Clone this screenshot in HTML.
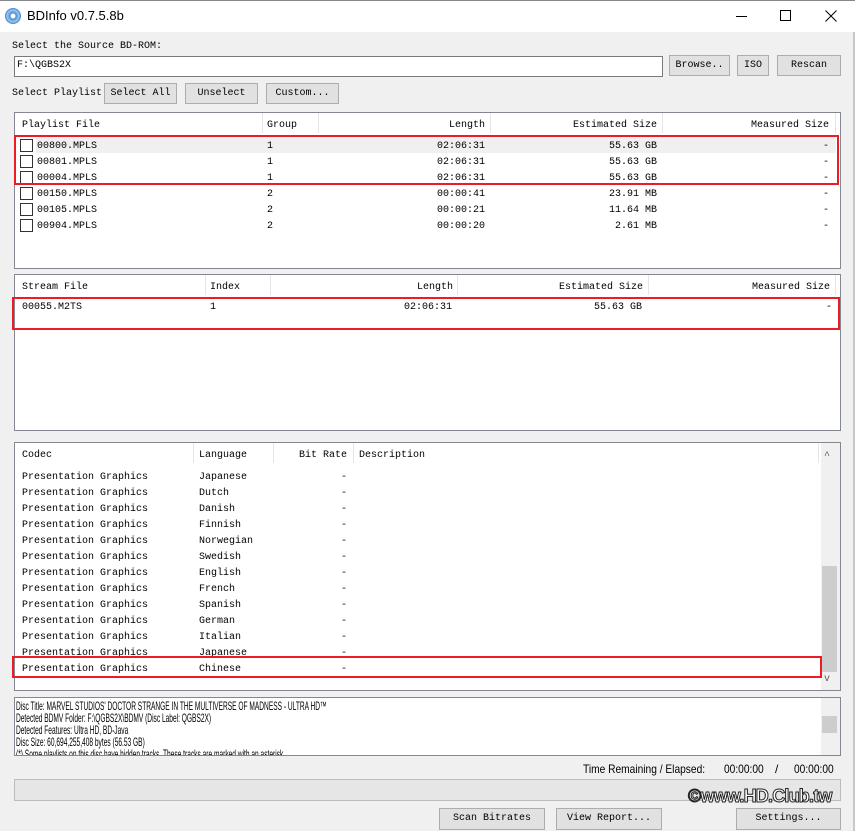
<!DOCTYPE html>
<html><head><meta charset="utf-8"><style>
*{margin:0;padding:0;box-sizing:border-box}
body{width:855px;height:831px;background:#f0f0f0;position:relative;overflow:hidden;font-family:"Liberation Mono","Noto Sans CJK SC",monospace;font-size:10px;color:#000}
div,span{position:absolute}
.t{white-space:pre;line-height:12px}
.btn{background:#e1e1e1;border:1px solid #adadad;text-align:center;line-height:20px;white-space:pre}
.box{background:#fff;border:1px solid #828790}
.sep{width:1px;background:#e5e5e5;top:1px;height:20px}
.red{border:2px solid #ed1c24}
.r{text-align:right}
.cb{width:13px;height:13px;border:1px solid #333;background:#fff}
</style></head><body>
<div style="left:0;top:0;width:855px;height:32px;background:#fff;border-top:1px solid #888"></div>
<div style="left:5px;top:8px;width:16px;height:16px;border-radius:50%;background:radial-gradient(circle,#fff 0 2px,#4a8fd6 3px,#9cc6ef 6px,#3b7cc4 8px)"></div>
<div style="left:27px;top:7px;font-family:'Liberation Sans',sans-serif;font-size:13px;line-height:18px;white-space:pre">BDInfo v0.7.5.8b</div>
<div style="left:736px;top:16px;width:11px;height:1px;background:#000"></div>
<div style="left:780px;top:10px;width:11px;height:11px;border:1px solid #000"></div>
<svg style="position:absolute;left:825px;top:10px" width="12" height="12"><path d="M0.5 0.5L11.5 11.5M11.5 0.5L0.5 11.5" stroke="#000" stroke-width="1"/></svg>
<div style="left:853px;top:32px;width:2px;height:799px;background:#c8c8c8"></div>

<div class="t" style="left:12px;top:41px">Select the Source BD-ROM:</div>
<div class="box" style="left:14px;top:56px;width:649px;height:21px;border-color:#7a7a7a"></div>
<div class="t" style="left:17px;top:60px">F:\QGBS2X</div>
<div class="btn" style="left:669px;top:55px;width:61px;height:21px">Browse..</div>
<div class="btn" style="left:737px;top:55px;width:32px;height:21px">ISO</div>
<div class="btn" style="left:777px;top:55px;width:64px;height:21px">Rescan</div>

<div class="t" style="left:12px;top:88px">Select Playlist</div>
<div class="btn" style="left:104px;top:83px;width:73px;height:21px">Select All</div>
<div class="btn" style="left:185px;top:83px;width:73px;height:21px">Unselect</div>
<div class="btn" style="left:266px;top:83px;width:73px;height:21px">Custom...</div>

<div class="box" style="left:14px;top:112px;width:827px;height:157px"></div>
<div class="sep" style="left:262px;top:113px"></div><div class="sep" style="left:318px;top:113px"></div><div class="sep" style="left:490px;top:113px"></div><div class="sep" style="left:662px;top:113px"></div><div class="sep" style="left:835px;top:113px"></div>
<div class="t" style="left:22px;top:120px">Playlist File</div>
<div class="t" style="left:267px;top:120px">Group</div>
<div class="t r" style="left:318px;top:120px;width:167px">Length</div>
<div class="t r" style="left:490px;top:120px;width:167px">Estimated Size</div>
<div class="t r" style="left:662px;top:120px;width:167px">Measured Size</div>
<div style="left:36px;top:137px;width:800px;height:16px;background:#f0f0f0"></div>
<div style="left:15px;top:137px;width:825px">
<div class="cb" style="left:5px;top:2px"></div><div class="cb" style="left:5px;top:18px"></div><div class="cb" style="left:5px;top:34px"></div><div class="cb" style="left:5px;top:50px"></div><div class="cb" style="left:5px;top:66px"></div><div class="cb" style="left:5px;top:82px"></div>
<div class="t" style="left:22px;top:2px;line-height:16px">00800.MPLS
00801.MPLS
00004.MPLS
00150.MPLS
00105.MPLS
00904.MPLS</div>
<div class="t" style="left:252px;top:2px;line-height:16px">1
1
1
2
2
2</div>
<div class="t r" style="left:303px;top:2px;width:167px;line-height:16px">02:06:31
02:06:31
02:06:31
00:00:41
00:00:21
00:00:20</div>
<div class="t r" style="left:475px;top:2px;width:167px;line-height:16px">55.63 GB
55.63 GB
55.63 GB
23.91 MB
11.64 MB
2.61 MB</div>
<div class="t r" style="left:647px;top:2px;width:167px;line-height:16px">-
-
-
-
-
-</div>
</div>
<div class="red" style="left:14px;top:135px;width:825px;height:50px"></div>

<div class="box" style="left:14px;top:274px;width:827px;height:157px"></div>
<div class="sep" style="left:205px;top:275px"></div><div class="sep" style="left:270px;top:275px"></div><div class="sep" style="left:457px;top:275px"></div><div class="sep" style="left:648px;top:275px"></div><div class="sep" style="left:835px;top:275px"></div>
<div class="t" style="left:22px;top:282px">Stream File</div>
<div class="t" style="left:210px;top:282px">Index</div>
<div class="t r" style="left:270px;top:282px;width:183px">Length</div>
<div class="t r" style="left:457px;top:282px;width:186px">Estimated Size</div>
<div class="t r" style="left:648px;top:282px;width:182px">Measured Size</div>
<div class="t" style="left:22px;top:302px">00055.M2TS</div>
<div class="t" style="left:210px;top:302px">1</div>
<div class="t r" style="left:270px;top:302px;width:182px">02:06:31</div>
<div class="t r" style="left:457px;top:302px;width:185px">55.63 GB</div>
<div class="t r" style="left:648px;top:302px;width:184px">-</div>
<div class="red" style="left:12px;top:297px;width:828px;height:33px"></div>

<div class="box" style="left:14px;top:442px;width:827px;height:249px"></div>
<div class="sep" style="left:193px;top:443px"></div><div class="sep" style="left:273px;top:443px"></div><div class="sep" style="left:353px;top:443px"></div><div class="sep" style="left:818px;top:443px"></div>
<div class="t" style="left:22px;top:450px">Codec</div>
<div class="t" style="left:199px;top:450px">Language</div>
<div class="t r" style="left:273px;top:450px;width:74px">Bit Rate</div>
<div class="t" style="left:359px;top:450px">Description</div>
<div class="t" style="left:22px;top:470px;line-height:16px">Presentation Graphics
Presentation Graphics
Presentation Graphics
Presentation Graphics
Presentation Graphics
Presentation Graphics
Presentation Graphics
Presentation Graphics
Presentation Graphics
Presentation Graphics
Presentation Graphics
Presentation Graphics
Presentation Graphics</div>
<div class="t" style="left:199px;top:470px;line-height:16px">Japanese
Dutch
Danish
Finnish
Norwegian
Swedish
English
French
Spanish
German
Italian
Japanese
Chinese</div>
<div class="t r" style="left:273px;top:470px;width:74px;line-height:16px">-
-
-
-
-
-
-
-
-
-
-
-
-</div>
<div style="left:821px;top:443px;width:19px;height:247px;background:#f0f0f0"></div>
<div style="left:822px;top:566px;width:15px;height:106px;background:#cdcdcd"></div>
<div class="t" style="left:824px;top:451px;color:#606060">^</div>
<div class="t" style="left:824px;top:674px;color:#606060">v</div>
<div class="red" style="left:12px;top:656px;width:810px;height:22px"></div>

<div class="box" style="left:14px;top:697px;width:827px;height:59px;overflow:hidden">
<div class="t" style="left:1px;top:2px;font-family:'Liberation Sans',sans-serif;font-size:12px;transform:scaleX(0.55);transform-origin:0 0">Disc Title: MARVEL STUDIOS' DOCTOR STRANGE IN THE MULTIVERSE OF MADNESS - ULTRA HD™
Detected BDMV Folder: F:\QGBS2X\BDMV (Disc Label: QGBS2X)
Detected Features: Ultra HD, BD-Java
Disc Size: 60,694,255,408 bytes (56.53 GB)
(*) Some playlists on this disc have hidden tracks. These tracks are marked with an asterisk.</div>
</div>
<div style="left:821px;top:698px;width:19px;height:57px;background:#f0f0f0"></div>
<div style="left:822px;top:716px;width:15px;height:17px;background:#cdcdcd"></div>

<div style="left:583px;top:762px;font-family:'Liberation Sans',sans-serif;font-size:12px;line-height:14px;white-space:pre;transform:scaleX(0.85);transform-origin:0 0">Time Remaining / Elapsed:</div>
<div style="left:724px;top:762px;font-family:'Liberation Sans',sans-serif;font-size:12px;line-height:14px;white-space:pre;transform:scaleX(0.85);transform-origin:0 0">00:00:00</div>
<div style="left:775px;top:762px;font-family:'Liberation Sans',sans-serif;font-size:12px;line-height:14px">/</div>
<div style="left:794px;top:762px;font-family:'Liberation Sans',sans-serif;font-size:12px;line-height:14px;white-space:pre;transform:scaleX(0.85);transform-origin:0 0">00:00:00</div>
<div style="left:14px;top:779px;width:827px;height:22px;background:#e6e6e6;border:1px solid #bcbcbc"></div>
<div style="left:688px;top:786px;font-family:'Liberation Sans',sans-serif;font-weight:bold;font-size:18px;line-height:20px;color:#fff;-webkit-text-stroke:1px #222;white-space:pre;letter-spacing:-0.8px">©www.HD.Club.tw</div>

<div class="btn" style="left:439px;top:808px;width:106px;height:22px">Scan Bitrates</div>
<div class="btn" style="left:556px;top:808px;width:106px;height:22px">View Report...</div>
<div class="btn" style="left:736px;top:808px;width:105px;height:22px">Settings...</div>
</body></html>
